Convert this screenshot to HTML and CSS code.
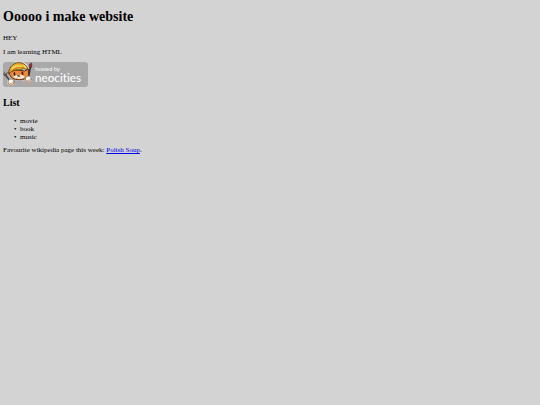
FILE: index.html
```html
<!DOCTYPE html>
<html lang="en">
<head>
<meta charset="utf-8">
<title>Ooooo i make website</title>
<link rel="stylesheet" href="styles.css">
</head>
<body>
<h1>Ooooo i make website</h1>
<p>HEY</p>
<p>I am learning HTML</p>
<a class="badge" href="#" aria-label="hosted by neocities">
<svg class="badge-art" viewBox="0 0 255 75" aria-hidden="true">
<rect width="255" height="75" rx="9" fill="#a9a9a9"/>
<g stroke-linecap="round" stroke-linejoin="round">
<g stroke="#dedede" stroke-width="5" fill="#dedede">
<path d="M20 28C24 9 38 0 51 2C67 2 75 13 76 28L77 42C69 53 56 55 42 53L21 42Z"/>
<path d="M3 34L22 58M82 4L76 43"/>
<circle cx="23" cy="60" r="8"/><circle cx="76" cy="51" r="8"/>
</g>
<path d="M19 29C18 43 27 51 43 53C59 55 72 50 77 40L76 21L65 27L43 24Z" fill="#f0893a" stroke="#4d2c18" stroke-width="3"/>
<path d="M30 45C35 40 42 42 47 36C53 41 60 39 65 44C61 52 37 52 30 45Z" fill="#fff1dc"/>
<path d="M17 34C17 20 26 7 40 3C56 -1 71 7 75 24C66 19 58 19 51 24C39 21 29 26 17 34Z" fill="#e8ae2c" stroke="#6b4918" stroke-width="3"/>
<path d="M27 20C33 13 43 10 55 13M63 10L68 17" fill="none" stroke="#ffdc62" stroke-width="4"/>
<path d="M27 25C36 17 48 15 60 17" fill="none" stroke="#a87520" stroke-width="2"/>
<path d="M34 33L35 38M58 31L59 36" stroke="#302019" stroke-width="5"/>
<path d="M44 39L50 39L47 42ZM47 42L43 46M47 42L52 45" fill="#603b29" stroke="#603b29" stroke-width="2"/>
<path d="M6 37L21 57" stroke="#424242" stroke-width="5"/>
<path d="M0 34L7 43L13 32M3 30L9 39" fill="none" stroke="#505050" stroke-width="3"/>
<path d="M82 15L77 44" stroke="#48302b" stroke-width="5"/>
<path d="M79 15C77 8 81 4 84 2C88 8 87 14 84 18Z" fill="#a32c32" stroke="#4c2427" stroke-width="2"/>
<circle cx="24" cy="60" r="9" fill="#fff8ec" stroke="#79634e" stroke-width="2"/>
<path d="M20 64Q25 68 29 62M26 66L32 71" fill="none" stroke="#e5a66e" stroke-width="3"/>
<circle cx="76" cy="51" r="9" fill="#fff8ec" stroke="#79634e" stroke-width="2"/>
<path d="M72 56Q78 59 82 52M75 61L78 69" fill="none" stroke="#d99d6a" stroke-width="3"/>
</g>
<text class="badge-small" x="97" y="27">hosted by</text>
<text class="badge-name" x="96" y="59">neocities</text>
</svg>
</a>
<h2>List</h2>
<ul>
<li>movie</li>
<li>book</li>
<li>music</li>
</ul>
<p>Favourite wikipedia page this week: <a href="#">Polish Soup</a>.</p>
</body>
</html>
```
FILE: styles.css
```css
body {
  margin: 9px 3px;
  background: #d3d3d3;
  color: #000;
  font: 7px/8px "Liberation Serif", serif;
}

h1 {
  margin: 0 0 9px;
  font-size: 14px;
  line-height: 16px;
}

h2 {
  margin: 10px 0 8px;
  font-size: 10px;
  line-height: 12px;
}

p {
  margin: 0 0 6px;
}

ul {
  margin: 0 0 5px;
  padding-left: 17px;
  list-style-type: "•\00a0\00a0";
}

a {
  color: #0000ee;
}

.badge {
  display: block;
  width: 85px;
}

.badge-art {
  display: block;
  width: 100%;
  overflow: visible;
}

.badge-small,
.badge-name {
  fill: #fff;
}

.badge-small {
  font-family: "Liberation Sans", sans-serif;
  font-size: 17px;
}

.badge-name {
  font-family: Lato, "Open Sans", sans-serif;
  font-size: 35px;
  font-weight: 500;
  font-variant-ligatures: none;
}
```
